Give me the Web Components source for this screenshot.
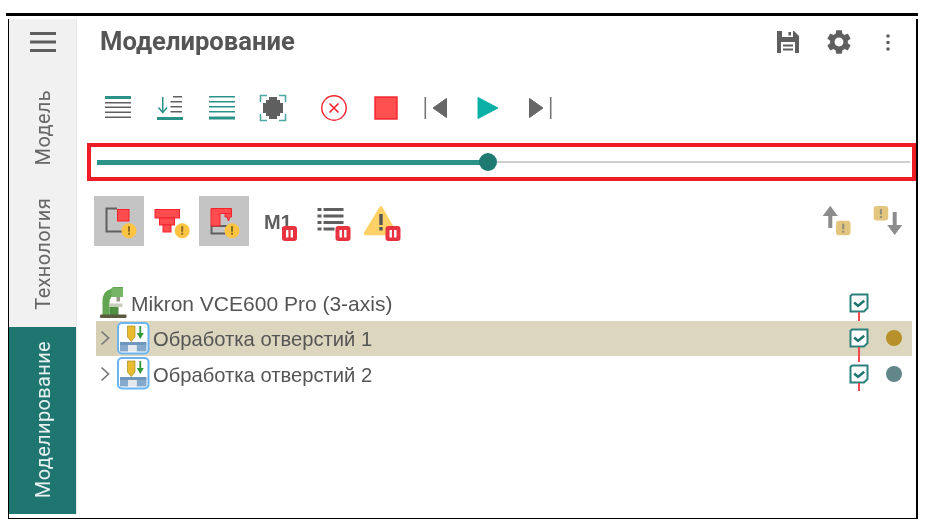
<!DOCTYPE html>
<html>
<head>
<meta charset="utf-8">
<title>Моделирование</title>
<style>
  html, body { margin: 0; background: #fff; }
  body { font-family: Roboto, "Liberation Sans", sans-serif; }
</style>
</head>
<body>
<app-frame>
  <side-bar slot="side">
    <side-tab style="height:126px;padding-bottom:2px;box-sizing:border-box" label="Модель"></side-tab>
    <side-tab style="height:135px;padding-bottom:11px;box-sizing:border-box" label="Технология"></side-tab>
    <side-tab style="height:187px;padding-bottom:2px;box-sizing:border-box" label="Моделирование" active></side-tab>
  </side-bar>
  <panel-head title="Моделирование"></panel-head>
  <sim-toolbar></sim-toolbar>
  <sim-slider value="391"></sim-slider>
  <filter-bar></filter-bar>
  <op-tree>
    <tree-row icon="machine" label="Mikron VCE600 Pro (3-axis)" link="15" size="21"></tree-row>
    <tree-row icon="op" label="Обработка отверстий 1" link="15" dot="#b8902a" size="20.2" selected expander></tree-row>
    <tree-row icon="op" label="Обработка отверстий 2" link="8" dot="#62868a" size="20.2" expander></tree-row>
  </op-tree>
</app-frame>

<script>
const G = '#5f5f5f'
const T = '#2a9288'
const R = '#f5222d'

const warn = (cx, cy) => `<circle cx="${cx}" cy="${cy}" r="7.5" fill="#fcc440"/><rect x="${cx - 1}" y="${cy - 4.5}" width="2" height="5.5" fill="#8a6d20"/><rect x="${cx - 1}" y="${cy + 2}" width="2" height="2" fill="#8a6d20"/>`
const pause = (cx, cy) => `<rect x="${cx - 7.5}" y="${cy - 7.5}" width="15" height="15" rx="3" fill="#e8323f"/><rect x="${cx - 3.5}" y="${cy - 3.5}" width="2.4" height="7.5" fill="#fff"/><rect x="${cx + 1.1}" y="${cy - 3.5}" width="2.4" height="7.5" fill="#fff"/>`
const mute = (x, y) => `<rect x="${x}" y="${y}" width="14.5" height="14.5" rx="3" fill="#e3c57e"/><rect x="${x + 6.2}" y="${y + 3}" width="2" height="5.5" fill="#8e8e7c"/><rect x="${x + 6.2}" y="${y + 10}" width="2" height="2" fill="#8e8e7c"/>`
const bars = (rows) => rows.map(([x, y, w, h, c]) => `<rect x="${x}" y="${y}" width="${w}" height="${h}" fill="${c}"/>`).join('')
const redFill = `fill="#ff4d4f" stroke="${R}" stroke-width="1"`

const ICONS = {
  menu: [26, 20, bars([[0, 0, 26, 3, G], [0, 8.5, 26, 3, G], [0, 17, 26, 3, G]])],
  save: [24, 24, `<path d="M1 1h17l5 5v17H1z" fill="${G}"/><rect x="6" y="1" width="11" height="6" fill="#fff"/><rect x="12.5" y="2" width="2.5" height="3.5" fill="${G}"/><rect x="5" y="12" width="14" height="11" fill="#fff"/><rect x="7" y="14.5" width="10" height="2" fill="${G}"/><rect x="7" y="18.5" width="10" height="2" fill="${G}"/>`],
  gear: [28, 28, `<g transform="translate(-.76 -.76) scale(1.23)"><path fill="${G}" d="M19.14,12.94c0.04-0.3,0.06-0.61,0.06-0.94c0-0.32-0.02-0.64-0.07-0.94l2.03-1.58c0.18-0.14,0.23-0.41,0.12-0.61l-1.92-3.32c-0.12-0.22-0.37-0.29-0.59-0.22l-2.39,0.96c-0.5-0.38-1.03-0.7-1.62-0.94L14.4,2.81c-0.04-0.24-0.24-0.41-0.48-0.41h-3.84c-0.24,0-0.43,0.17-0.47,0.41L9.25,5.35C8.66,5.59,8.12,5.92,7.63,6.29L5.24,5.33c-0.22-0.08-0.47,0-0.59,0.22L2.74,8.87C2.62,9.08,2.66,9.34,2.86,9.48l2.03,1.58C4.84,11.36,4.8,11.69,4.8,12s0.02,0.64,0.07,0.94l-2.03,1.58c-0.18,0.14-0.23,0.41-0.12,0.61l1.92,3.32c0.12,0.22,0.37,0.29,0.59,0.22l2.39-0.96c0.5,0.38,1.03,0.7,1.62,0.94l0.36,2.54c0.05,0.24,0.24,0.41,0.48,0.41h3.84c0.24,0,0.44-0.17,0.47-0.41l0.36-2.54c0.59-0.24,1.13-0.56,1.62-0.94l2.39,0.96c0.22,0.08,0.47,0,0.59-0.22l1.92-3.32c0.12-0.22,0.07-0.47-0.12-0.61L19.14,12.94z M12,15.6c-1.98,0-3.6-1.62-3.6-3.6s1.62-3.6,3.6-3.6s3.6,1.62,3.6,3.6S13.98,15.6,12,15.6z"/></g>`],
  more: [8, 18, `<circle cx="4" cy="3" r="1.800" fill="${G}"/><circle cx="4" cy="9.500" r="1.800" fill="${G}"/><circle cx="4" cy="16" r="1.800" fill="${G}"/>`],
  first: [28, 26, bars([[1, 1, 26, 3, T], [1, 7, 26, 1.500, G], [1, 11.500, 26, 1.500, G], [1, 16.500, 26, 1.500, G], [1, 21.500, 26, 1.500, G]])],
  down: [28, 26, bars([[1, 22, 26, 3, T], [17, 1, 9, 1.500, G], [14.500, 6, 11.500, 1.500, G], [14.500, 11, 11.500, 1.500, G], [14.500, 16, 11.500, 1.500, G], [6, 2, 1.500, 15, T]]) + `<path d="M2.500 12.500l4.250 5 4.250-5" fill="none" stroke="${T}" stroke-width="1.500"/>`],
  last: [28, 26, bars([[1, 1, 26, 1.500, T], [1, 6, 26, 1.500, T], [1, 11, 26, 1.500, T], [1, 16, 26, 1.500, T], [1, 21.500, 26, 3, T]])],
  fit: [28, 28, `<path d="M1.500 8V1.500H8M20 1.500h6.500V8M1.500 20v6.500H8M20 26.500h6.500V20" fill="none" stroke="#4ea8a2" stroke-width="1.600"/><path fill="${G}" d="M10 3h8v3h3v3h3v10h-3v3h-3v3h-8v-3H7v-3H4V9h3V6h3z"/>`],
  stop: [28, 28, `<circle cx="14" cy="14" r="12.200" fill="#fff" stroke="${R}" stroke-width="1.400"/><path d="M9.500 9.500l9 9m0-9l-9 9" stroke="${R}" stroke-width="1.600"/>`],
  square: [24, 24, `<rect x="1" y="1" width="22" height="22" fill="#ff5050" stroke="${R}" stroke-width="1.400"/>`],
  prev: [24, 24, `<rect x="0.500" y="1" width="1.600" height="22" fill="#777"/><path d="M9 12L22.500 2.500v19z" fill="#666" stroke="#666" stroke-linejoin="round" stroke-width="1"/>`],
  play: [22, 24, `<path d="M1 1.500L21 12 1 22.500z" fill="#0cb0a6" stroke="#0cb0a6" stroke-linejoin="round" stroke-width="1"/>`],
  next: [24, 24, `<rect x="21.900" y="1" width="1.600" height="22" fill="#777"/><path d="M15 12L1.500 2.500v19z" fill="#666" stroke="#666" stroke-linejoin="round" stroke-width="1"/>`],
  fstock: [50, 50, `<path d="M23 12.500H12.500V35.500H29" fill="none" stroke="${G}" stroke-width="2"/><rect x="23.500" y="13.500" width="11.500" height="11.500" ${redFill}/>` + warn(35, 34.700)],
  ftool: [50, 50, `<rect x="8" y="13.500" width="24.500" height="8.500" ${redFill}/><rect x="12.500" y="22" width="15" height="7" ${redFill}/><rect x="16" y="29" width="8" height="7" ${redFill}/>` + warn(35.200, 34.700)],
  fmach: [50, 50, `<rect x="12.500" y="30" width="20" height="7.500" fill="none" stroke="${G}" stroke-width="2"/><path d="M12 12.500h20.500v5H21V30h-9z" ${redFill}/><path d="M26 17.500h6.500v3.500h-1.500l-1.500 4-1.500-4H26z" ${redFill}/>` + warn(33, 34.700)],
  m1: [50, 50, `<text x="12" y="33" font-family="Liberation Sans, sans-serif" font-weight="700" font-size="20" fill="${G}">M1</text>` + pause(37.500, 37.500)],
  list: [50, 50, bars([[13.500, 12, 4, 3, G], [19.500, 12, 20, 3, G], [13.500, 18.500, 4, 3, G], [19.500, 18.500, 20, 3, G], [13.500, 25, 4, 3, G], [19.500, 25, 20, 3, G], [13.500, 31.500, 4, 3, G], [19.500, 31.500, 11, 3, G]]) + pause(39, 37.500)],
  warn: [50, 50, `<path d="M24 12L38.500 37.500H8.500z" fill="#ffd166" stroke="#ffd166" stroke-linejoin="round" stroke-width="3.500"/><rect x="22.300" y="18" width="3.400" height="11" fill="#555"/><rect x="22.300" y="31" width="3.400" height="3.500" fill="#555"/>` + pause(36, 37.500)],
  up: [30, 32, `<path d="M8.300 .7l7.500 10.300H10.300v12H6.300V11H.7z" fill="#8c8c8c"/>` + mute(14, 15.700)],
  dn: [30, 32, mute(.7, 1) + `<path d="M19.700 7h4v13h5.500l-7.500 10-7.500-10h5.500z" fill="#8c8c8c"/>`],
  machine: [28, 32, `<path d="M3.500 28V14Q3.500 4 12 2L14 0h10v10H12v1q-1.500 1-1.500 4V28z" fill="#62a552"/><rect x="12.500" y="1" width="11.500" height="9" fill="#76b565"/><rect x="17.500" y="10" width="3.500" height="4.500" fill="#9a9a8a"/><rect x="10" y="16.500" width="13.500" height="3.500" fill="#c5cdbb"/><rect x="10.500" y="20" width="9" height="8" fill="#4e8f42"/><rect x="1" y="27.500" width="26.500" height="3.500" rx="1" fill="#5b5b42"/>`],
  op: [33, 33, `<rect x="1" y="1" width="30.500" height="30.500" rx="4" fill="#fff" stroke="#6ab4f2" stroke-width="2"/><path d="M10.500 4h7.500v11l-3.750 4.500L10.500 15z" fill="#e8bc2e" stroke="#a88a2a" stroke-width=".7"/><rect x="22.400" y="4" width="1.800" height="10" fill="#2f9a3a"/><path d="M19.800 11h7l-3.500 6z" fill="#2f9a3a"/><rect x="3" y="20" width="26.500" height="3" fill="#6e97bd"/><rect x="3" y="23" width="8" height="6.500" fill="#86a9cb"/><rect x="19.500" y="23" width="10" height="6.500" fill="#86a9cb"/><rect x="11" y="23" width="8.500" height="6.500" fill="#e4e9ee"/>`],
  check: [20, 20, `<path d="M3 1.500h15.500V15L15 18.500H1.500V3z" fill="#fff" stroke="#2b807c" stroke-width="2"/><path d="M5.200 9.500l3.800 3.400 6.200-5.200" fill="none" stroke="#1f7570" stroke-width="2.600"/>`],
  chevron: [10, 16, `<path d="M1.500 1.500L8.500 8l-7 6.500" fill="none" stroke="#777" stroke-width="1.700"/>`]
}

class AppIcon extends HTMLElement {
  connectedCallback() {
    const [w, h, body] = ICONS[this.getAttribute('name')]
    this.attachShadow({mode: 'open'}).innerHTML = `
      <style>:host { display: block; flex: none; line-height: 0; } svg { display: block; }</style>
      <svg width="${w}" height="${h}" viewBox="0 0 ${w} ${h}">${body}</svg>
    `
  }
}

class AppFrame extends HTMLElement {
  constructor() {
    super()
    this.attachShadow({mode: 'open'}).innerHTML = `
      <style>
        :host { display: block; padding-top: 13px; filter: blur(.4px); }
        .rule { height: 3px; margin: 0 7px 3px 6px; background: #000; }
        .box {
          display: flex;
          height: 500px;
          box-sizing: border-box;
          margin: 0 7px 0 8px;
          border: solid #000;
          border-width: 0 2px 1px 1px;
        }
        .main { flex: 1; min-width: 0; padding-right: 1px; }
      </style>
      <div class="rule"></div>
      <div class="box">
        <slot name="side"></slot>
        <div class="main"><slot></slot></div>
      </div>
    `
  }
}

class SideBar extends HTMLElement {
  constructor() {
    super()
    this.attachShadow({mode: 'open'}).innerHTML = `
      <style>
        :host { display: flex; flex-direction: column; width: 67px; margin-right: 1px; background: #f1f1f1; box-shadow: 1px 0 0 #e8e8e8; }
        .burger { display: flex; justify-content: center; padding-top: 13px; height: 34px; }
        .tail { flex: 1; background: #fff; margin-right: -1px; }
      </style>
      <div class="burger"><app-icon name="menu"></app-icon></div>
      <slot></slot>
      <div class="tail"></div>
    `
  }
}

class SideTab extends HTMLElement {
  connectedCallback() {
    const active = this.hasAttribute('active')
    this.attachShadow({mode: 'open'}).innerHTML = `
      <style>
        :host { display: flex; align-items: center; justify-content: center; flex: none;
          background: ${active ? '#1f7570' : 'transparent'}; }
        span { writing-mode: vertical-rl; transform: rotate(180deg); font: 400 20px Roboto, sans-serif;
          letter-spacing: .35px; color: ${active ? '#e6f1f0' : '#666'}; white-space: nowrap; }
      </style>
      <span>${this.getAttribute('label')}</span>
    `
  }
}

class PanelHead extends HTMLElement {
  connectedCallback() {
    this.attachShadow({mode: 'open'}).innerHTML = `
      <style>
        :host { display: flex; align-items: center; height: 46px; padding: 0 23px 0 23px; }
        h1 { flex: 1; margin: 0 0 2px; font: 700 25.6px Roboto, sans-serif; color: #555; }
        .acts { display: flex; align-items: center; }
      </style>
      <h1>${this.getAttribute('title')}</h1>
      <div class="acts">
        <app-icon name="save"></app-icon>
        <app-icon name="gear" style="margin-left:24.5px"></app-icon>
        <app-icon name="more" style="margin-left:31.5px"></app-icon>
      </div>
    `
  }
}

class SimToolbar extends HTMLElement {
  constructor() {
    super()
    const item = (name, ml) => `<app-icon name="${name}" style="margin-left:${ml}px"></app-icon>`
    this.attachShadow({mode: 'open'}).innerHTML = `
      <style>:host { display: flex; align-items: center; height: 38px; margin-top: 24px; padding-left: 27px; }</style>
      ${item('first', 0)}${item('down', 24)}${item('last', 23.5)}${item('fit', 23.5)}
      ${item('stop', 33)}${item('square', 26)}${item('prev', 26)}${item('play', 29)}${item('next', 29)}
    `
  }
}

class SimSlider extends HTMLElement {
  connectedCallback() {
    const pos = this.getAttribute('value')
    this.attachShadow({mode: 'open'}).innerHTML = `
      <style>
        :host { display: flex; align-items: center; height: 30px; margin: 16px -1px 0 10px;
          padding: 0 2px 0 6px; border: 4px solid #ee1c25; }
        .fill { width: ${pos}px; height: 5px; background: #2a9288; }
        .thumb { width: 18px; height: 18px; margin: 0 -9px; border-radius: 50%; background: #1f7a74; position: relative; }
        .rest { flex: 1; height: 2px; background: #cfcfcf; }
      </style>
      <div class="fill"></div><div class="thumb"></div><div class="rest"></div>
    `
  }
}

class FilterBar extends HTMLElement {
  constructor() {
    super()
    const btn = (name, on) => `<div class="btn ${on ? 'on' : ''}"><app-icon name="${name}"></app-icon></div>`
    this.attachShadow({mode: 'open'}).innerHTML = `
      <style>
        :host { display: flex; align-items: center; height: 50px; margin-top: 15px; padding: 0 12px 0 17px; }
        .btn { width: 50px; height: 50px; margin-right: 2.5px; }
        .on { background: #c4c4c4; }
        .spacer { flex: 1; }
        .r { display: flex; align-items: center; gap: 21px; }
      </style>
      ${btn('fstock', true)}${btn('ftool', false)}${btn('fmach', true)}${btn('m1', false)}${btn('list', false)}${btn('warn', false)}
      <div class="spacer"></div>
      <div class="r"><app-icon name="up"></app-icon><app-icon name="dn"></app-icon></div>
    `
  }
}

class OpTree extends HTMLElement {
  constructor() {
    super()
    this.attachShadow({mode: 'open'}).innerHTML = `
      <style>:host { display: block; margin: 39px 3px 0 19px; }</style>
      <slot></slot>
    `
  }
}

class TreeRow extends HTMLElement {
  connectedCallback() {
    const selected = this.hasAttribute('selected')
    const expander = this.hasAttribute('expander')
    const dot = this.getAttribute('dot')
    this.attachShadow({mode: 'open'}).innerHTML = `
      <style>
        :host { display: flex; align-items: center; height: 35.5px; position: relative;
          background: ${selected ? '#dcd6bf' : 'transparent'}; }
        .exp { display: flex; align-items: center; align-self: stretch; width: 21px; padding-left: 4px; box-sizing: border-box; flex: none;
          background: ${selected ? '#d6cfb6' : 'transparent'}; }
        .label { flex: 1; margin: 3px 0 0 ${expander ? 3 : 4}px; font: 400 ${this.getAttribute('size')}px "Liberation Sans", sans-serif; color: #555; white-space: nowrap; }
        .state { position: relative; width: 20px; margin-right: 43.5px; flex: none; }
        .state::after {
          content: ''; position: absolute; left: 9px; top: 19px; width: 2px;
          height: ${this.getAttribute('link')}px; background: #f04a50;
        }
        .dot { position: absolute; right: 9.700px; top: 9.500px; width: 16px; height: 16px; border-radius: 50%; background: ${dot || 'none'}; }
        .mach { margin-left: 3px; }
      </style>
      ${expander ? '<div class="exp"><app-icon name="chevron"></app-icon></div>' : ''}
      <app-icon class="${expander ? '' : 'mach'}" name="${this.getAttribute('icon')}"></app-icon>
      <div class="label">${this.getAttribute('label')}</div>
      <div class="state"><app-icon name="check"></app-icon></div>
      ${dot ? '<div class="dot"></div>' : ''}
    `
  }
}

customElements.define('app-icon', AppIcon)
customElements.define('app-frame', AppFrame)
customElements.define('side-bar', SideBar)
customElements.define('side-tab', SideTab)
customElements.define('panel-head', PanelHead)
customElements.define('sim-toolbar', SimToolbar)
customElements.define('sim-slider', SimSlider)
customElements.define('filter-bar', FilterBar)
customElements.define('op-tree', OpTree)
customElements.define('tree-row', TreeRow)
</script>
</body>
</html>
